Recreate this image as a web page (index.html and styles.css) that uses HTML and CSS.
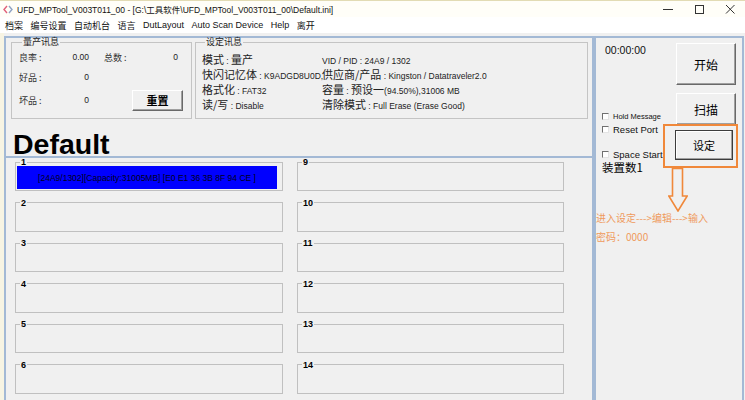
FILE: index.html
```html
<!DOCTYPE html>
<html lang="zh-CN">
<head>
    <meta charset="UTF-8">
    <title>UFD_MPTool</title>
    <link rel="stylesheet" href="styles.css">
</head>
<body>
<div class="window">
    <div class="titlebar">
        <svg class="app-icon" width="10" height="9" viewBox="0 0 10 9">
            <path d="M4 1 L1 4.5 L4 8" fill="none" stroke="#e0607a" stroke-width="1.4"/>
            <path d="M6 1 L9 4.5 L6 8" fill="none" stroke="#8fa3c4" stroke-width="1.4"/>
        </svg>
        <span class="title">UFD_MPTool_V003T011_00 - [G:\工具软件\UFD_MPTool_V003T011_00\Default.ini]</span>
        <div class="win-ctrls">
            <span class="ctrl"><svg width="10" height="10" viewBox="0 0 10 10"><path d="M0 5.5 H10" stroke="#333" stroke-width="1"/></svg></span>
            <span class="ctrl"><svg width="10" height="10" viewBox="0 0 10 10"><rect x="1.5" y="1.5" width="8" height="8" fill="none" stroke="#333" stroke-width="1"/></svg></span>
            <span class="ctrl"><svg width="10" height="10" viewBox="0 0 10 10"><path d="M1 1 L9.5 9.5 M9.5 1 L1 9.5" stroke="#333" stroke-width="1"/></svg></span>
        </div>
    </div>

    <ul class="menubar">
        <li class="cjk">档案</li>
        <li class="cjk">编号设置</li>
        <li class="cjk">自动机台</li>
        <li class="cjk">语言</li>
        <li>DutLayout</li>
        <li>Auto Scan Device</li>
        <li>Help</li>
        <li class="cjk">离开</li>
    </ul>

    <div class="client">
        <div class="main">
            <div class="info">
                <div class="info-groups">
                    <fieldset class="group stats">
                        <legend>量产讯息</legend>
                        <div class="stat-row">
                            <span class="stat-label">良率 :</span>
                            <span class="stat-val">0.00</span>
                            <span class="stat-label second">总数 :</span>
                            <span class="stat-val">0</span>
                        </div>
                        <div class="stat-row">
                            <span class="stat-label">好品 :</span>
                            <span class="stat-val">0</span>
                        </div>
                        <div class="stat-row last">
                            <span class="stat-label">坏品 :</span>
                            <span class="stat-val">0</span>
                            <button class="btn btn-reset">重置</button>
                        </div>
                    </fieldset>
                    <fieldset class="group settings">
                        <legend>设定讯息</legend>
                        <div class="settings-grid">
                            <div><span class="k">模式</span><span class="v"> : </span><span class="k">量产</span></div>
                            <div><span class="v">VID / PID : 24A9 / 1302</span></div>
                            <div><span class="k">快闪记忆体</span><span class="v"> : K9ADGD8U0D,</span></div>
                            <div><span class="k">供应商/产品</span><span class="v"> : Kingston / Datatraveler2.0</span></div>
                            <div><span class="k">格式化</span><span class="v"> : FAT32</span></div>
                            <div><span class="k">容量</span><span class="v"> : </span><span class="k">预设一</span><span class="v">(94.50%),31006 MB</span></div>
                            <div><span class="k">读/写</span><span class="v"> : Disable</span></div>
                            <div><span class="k">清除模式</span><span class="v"> : Full Erase (Erase Good)</span></div>
                        </div>
                    </fieldset>
                </div>
                <div class="profile">Default</div>
            </div>

            <div class="slots">
                <fieldset class="slot"><legend>1</legend><div class="device-bar">[24A9/1302][Capacity:31005MB] [E0 E1 36 3B 8F 94 CE ]</div></fieldset>
                <fieldset class="slot"><legend>2</legend></fieldset>
                <fieldset class="slot"><legend>3</legend></fieldset>
                <fieldset class="slot"><legend>4</legend></fieldset>
                <fieldset class="slot"><legend>5</legend></fieldset>
                <fieldset class="slot"><legend>6</legend></fieldset>
                <fieldset class="slot"><legend>9</legend></fieldset>
                <fieldset class="slot"><legend>10</legend></fieldset>
                <fieldset class="slot"><legend>11</legend></fieldset>
                <fieldset class="slot"><legend>12</legend></fieldset>
                <fieldset class="slot"><legend>13</legend></fieldset>
                <fieldset class="slot"><legend>14</legend></fieldset>
            </div>
        </div>

        <div class="side">
            <div class="side-top">
                <div class="status">
                    <div class="timer">00:00:00</div>
                    <div class="check small"><span class="box"></span>Hold Message</div>
                    <div class="check"><span class="box"></span>Reset Port</div>
                    <div class="check space"><span class="box"></span>Space Start</div>
                    <div class="count">装置数1</div>
                </div>
                <div class="actions">
                    <button class="btn btn-start">开始</button>
                    <button class="btn btn-scan">扫描</button>
                    <button class="btn btn-set">设定</button>
                </div>
            </div>
            <div class="hint">
                <div>进入设定---&gt;编辑---&gt;输入</div>
                <div>密码：0000</div>
            </div>

            <div class="mark-box"></div>
            <svg class="mark-arrow" width="20" height="44" viewBox="0 0 20 44">
                <path d="M4.5 0.5 V28 H0.8 L10 43 L19.2 28 H14.5 V0.5 Z" fill="none" stroke="#f0883a" stroke-width="1.6"/>
            </svg>
        </div>
    </div>
</div>
</body>
</html>
```

FILE: styles.css
```css
* {
    box-sizing: border-box;
}

html, body {
    margin: 0;
    padding: 0;
    height: 100%;
    overflow: hidden;
}

body {
    font-family: "Liberation Sans", "Noto Sans CJK SC", sans-serif;
    background-color: #f7f4e3;
    color: #000;
}

.window {
    width: 745px;
    height: 400px;
    display: flex;
    flex-direction: column;
}

/* title bar */
.titlebar {
    height: 17px;
    flex-shrink: 0;
    display: flex;
    align-items: center;
    background-color: #fffef8;
    border-top: 1px solid #e2dbb4;
    padding-left: 3px;
    font-size: 8.5px;
    color: #111;
}

.app-icon {
    margin-right: 4px;
}

.win-ctrls {
    margin-left: auto;
    display: flex;
}

.ctrl {
    width: 31px;
    height: 15px;
    display: flex;
    align-items: center;
    justify-content: center;
}

/* menu */
.menubar {
    list-style: none;
    margin: 0;
    padding: 0 0 0 5px;
    height: 16px;
    flex-shrink: 0;
    display: flex;
    align-items: center;
    gap: 7.5px;
    background-color: #fff;
    font-size: 9px;
    color: #111;
}

.menubar .cjk {
    font-family: "Noto Sans CJK SC", sans-serif;
}

/* client area */
.client {
    flex: 1;
    display: flex;
    padding-top: 3px;
    padding-left: 4px;
    background-color: #f0f0f0;
    box-shadow: inset 4px 0 0 #f7f4e3;
}

.main {
    width: 590px;
    display: flex;
    flex-direction: column;
}

.info {
    height: 122px;
    flex-shrink: 0;
    border: 2px solid #a3b9d5;
    padding-left: 5px;
}

.info-groups {
    display: flex;
    gap: 3px;
}

.group {
    margin: 0;
    padding: 0;
    min-width: 0;
    height: 81px;
    border: 1px solid #c4c4c4;
}

.group legend {
    font-family: "Noto Sans CJK SC", sans-serif;
    font-size: 9px;
    line-height: 8px;
    padding: 0 1px;
    margin-left: 3px;
    color: #222;
}

.stats {
    width: 181px;
    padding: 1px 0 0 7px;
}

.stat-row {
    display: flex;
    align-items: center;
    height: 20px;
}

.stat-row.last {
    height: 22px;
    margin-top: 2px;
}

.stat-label {
    width: 46px;
    font-family: "Noto Sans CJK SC", sans-serif;
    font-size: 9px;
    color: #333;
}

.stat-label.second {
    margin-left: 15px;
    width: 50px;
}

.stat-val {
    width: 24px;
    text-align: right;
    font-size: 8.5px;
    color: #222;
}

.settings {
    width: 393px;
    padding: 5px 0 0 6px;
}

.settings-grid {
    display: grid;
    grid-template-columns: 120px auto;
    grid-auto-rows: 15px;
    align-items: center;
    white-space: nowrap;
    color: #222;
}

.k {
    font-family: "Noto Sans CJK SC", sans-serif;
    font-size: 11px;
}

.v {
    font-size: 8.5px;
    white-space: pre;
}

.profile {
    font-size: 28.5px;
    font-weight: bold;
    line-height: 20px;
    margin: 15px 0 0 2px;
}

/* buttons */
.btn {
    font-family: "Noto Sans CJK SC", sans-serif;
    background-color: #f0f0f0;
    border: 1px solid;
    border-color: #fff #696969 #696969 #fff;
    box-shadow: inset -1px -1px 0 #a0a0a0;
    padding: 0;
    color: #000;
}

.btn-reset {
    width: 51px;
    height: 21px;
    margin-left: 43px;
    font-size: 11px;
    font-weight: bold;
}

/* device slots */
.slots {
    flex: 1;
    border-left: 2px solid #a3b9d5;
    border-right: 2px solid #a3b9d5;
    padding: 0 0 0 9px;
    display: grid;
    grid-template-columns: 268px 267px;
    grid-template-rows: repeat(6, 33px);
    column-gap: 14px;
    row-gap: 7.5px;
    grid-auto-flow: column;
}

.slot {
    margin: 0;
    padding: 0 5px 0 1px;
    min-width: 0;
    border: 1px solid #c0c0c0;
}

.slot legend {
    font-size: 9px;
    font-weight: bold;
    line-height: 8px;
    padding: 0 1px;
    margin-left: 3px;
}

.device-bar {
    height: 23px;
    background-color: #0000ff;
    color: #00001a;
    font-size: 8.5px;
    display: flex;
    align-items: center;
    justify-content: center;
    white-space: nowrap;
}

/* right panel */
.side {
    width: 150px;
    position: relative;
    border: 2px solid #a3b9d5;
    border-bottom: 0;
}

.side-top {
    display: flex;
}

.status {
    flex: 1;
    padding: 6px 0 0 6px;
}

.timer {
    font-size: 10.5px;
    line-height: 12px;
    margin-left: 3px;
    margin-bottom: 54px;
    color: #111;
}

.check {
    display: flex;
    align-items: center;
    height: 13px;
    font-size: 9.5px;
    white-space: nowrap;
    color: #111;
}

.check.small {
    font-size: 7.5px;
}

.check.space {
    margin-top: 12px;
    height: 12px;
}

.box {
    width: 7px;
    height: 7px;
    margin-right: 4px;
    background-color: #fff;
    border: 1px solid;
    border-color: #707070 #e4e4e4 #e4e4e4 #707070;
}

.count {
    font-family: "Noto Sans CJK SC", sans-serif;
    font-size: 11.5px;
    line-height: 12px;
    margin-top: 1px;
}

.actions {
    width: 60px;
    margin-right: 6px;
    padding-top: 5px;
    display: flex;
    flex-direction: column;
}

.btn-start {
    height: 42px;
    font-size: 12px;
}

.btn-scan {
    height: 32px;
    margin-top: 8px;
    font-size: 12px;
}

.btn-set {
    height: 30px;
    width: 58px;
    margin-top: 5px;
    margin-left: -1px;
    font-size: 11px;
    border: 1px solid #3c3c3c;
    box-shadow: inset -1px -1px 0 #a0a0a0, inset 1px 1px 0 #fff;
}

.hint {
    margin-top: 35px;
    font-family: "Noto Sans CJK SC", sans-serif;
    font-size: 10px;
    line-height: 19px;
    color: #ef9a5c;
    white-space: nowrap;
}

.mark-box {
    position: absolute;
    left: 67px;
    top: 86px;
    width: 75px;
    height: 44px;
    border: 2px solid #f0883a;
}

.mark-arrow {
    position: absolute;
    left: 72px;
    top: 130px;
}
```
